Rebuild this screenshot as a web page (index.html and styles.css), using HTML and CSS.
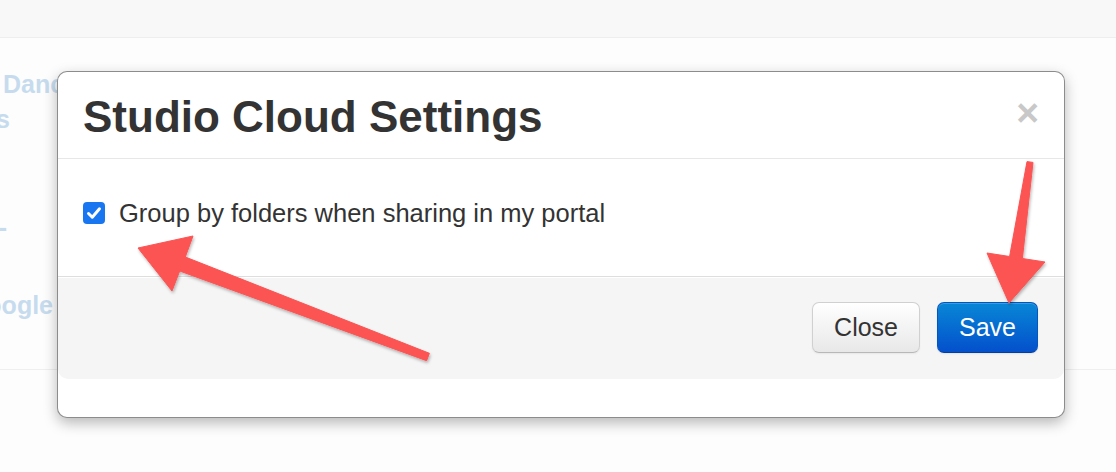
FILE: index.html
```html
<!DOCTYPE html>
<html lang="en">
<head>
<meta charset="utf-8">
<title>Studio Cloud Settings</title>
<link rel="stylesheet" href="styles.css">
</head>
<body>
<div class="page">
  <div class="topbar"></div>
  <div class="bg-list">
    <div class="bgrow r1">Dance Studio</div>
    <div class="bgrow r2 clip"><span>Classes</span></div>
    <div class="bgrow r3 clip"><span>Studio -</span></div>
    <div class="bgrow r4 clip"><span>Google</span></div>
    <div class="divider"></div>
  </div>

  <div class="modal">
    <div class="modal-header">
      <h3 class="modal-title">Studio Cloud Settings</h3>
      <span class="close">×</span>
    </div>
    <div class="modal-body">
      <label class="check-row">
        <span class="checkbox">
          <svg viewBox="0 0 22 22" width="22" height="22"><path d="M5.5 11.5 L9.3 15.2 L16.5 6.8" fill="none" stroke="#fff" stroke-width="3" stroke-linecap="round" stroke-linejoin="round"/></svg>
        </span>
        <span class="check-label">Group by folders when sharing in my portal</span>
      </label>
    </div>
    <div class="modal-footer">
      <button class="btn btn-default">Close</button>
      <button class="btn btn-primary">Save</button>
    </div>
  </div>

  <svg class="arrows" viewBox="0 0 1116 472" width="1116" height="472">
    <defs>
      <filter id="sh" x="-10%" y="-10%" width="120%" height="120%">
        <feDropShadow dx="1" dy="2" stdDeviation="1.5" flood-color="#000" flood-opacity="0.28"/>
      </filter>
    </defs>
    <polygon filter="url(#sh)" fill="#fc5353" stroke="#fc5353" stroke-width="1" stroke-linejoin="round"
      points="138,248 193,236 185.3,257 429.4,353.3 426.6,360.7 179.7,271 172,291"/>
    <polygon filter="url(#sh)" fill="#fc5353" stroke="#fc5353" stroke-width="1" stroke-linejoin="round"
      points="1009,303 987,253 1009.6,256.5 1027,161.6 1033,162.4 1022.4,258.5 1045,262"/>
  </svg>
</div>
</body>
</html>
```
FILE: styles.css
```css
* { box-sizing: border-box; }
html, body { margin: 0; padding: 0; }
body {
  background: #fefdfd;
  font-family: "Liberation Sans", Arial, Helvetica, sans-serif;
  color: #333;
}
.page {
  position: relative;
  width: 1116px;
  height: 472px;
  overflow: hidden;
}
.topbar {
  height: 38px;
  background: #f9f8f8;
  border-bottom: 1px solid #efeded;
}
.bg-list {
  padding-top: 29px;
}
.bgrow {
  font-size: 25px;
  font-weight: bold;
  line-height: 35px;
  height: 35px;
  color: #c6dcee;
  white-space: nowrap;
}
.bgrow.clip {
  display: flex;
  justify-content: flex-end;
  overflow: hidden;
}
.r1 { padding-left: 3px; }
.r2 { width: 10px; }
.r3 { width: 7px; margin-top: 73px; }
.r4 { width: 53px; margin-top: 43px; }
.divider {
  margin-top: 46px;
  border-top: 1px solid #efefef;
}

.modal {
  position: absolute;
  left: 57px;
  top: 71px;
  width: 1008px;
  background: #fff;
  border: 1px solid rgba(0, 0, 0, 0.45);
  border-radius: 10px;
  box-shadow: 0 5px 14px rgba(0, 0, 0, 0.28);
  padding-bottom: 38px;
}
.modal-header {
  display: flex;
  justify-content: space-between;
  align-items: center;
  padding: 18px 25px 15px 25px;
  border-bottom: 1px solid #e7e7e7;
}
.modal-title {
  margin: 0;
  font-size: 44px;
  line-height: 53px;
  font-weight: bold;
  color: #333;
}
.close {
  font-size: 39px;
  line-height: 1;
  font-weight: bold;
  color: #c8c8c8;
  margin-top: -9px;
}
.modal-body {
  padding: 36px 27px 45px 25px;
}
.check-row {
  display: flex;
  align-items: center;
  gap: 14px;
  line-height: 36px;
}
.checkbox {
  width: 22px;
  height: 22px;
  border-radius: 4px;
  background: #1877f0;
  display: flex;
}
.check-label {
  font-size: 25.5px;
  color: #333;
}
.modal-footer {
  display: flex;
  justify-content: flex-end;
  gap: 17px;
  padding: 25px 26px 26px;
  background: #f5f5f5;
  border-top: 1px solid #dedede;
  border-radius: 0 0 10px 10px;
  box-shadow: inset 0 1px 0 #fff;
}
.btn {
  height: 51px;
  padding: 0 21px;
  font-family: "Liberation Sans", Arial, Helvetica, sans-serif;
  font-size: 25px;
  border-radius: 7px;
  border: 1px solid #c8c8c8;
}
.btn-default {
  color: #333;
  background: linear-gradient(#ffffff, #e8e8e8);
  border-color: #d0d0d0 #d0d0d0 #b8b8b8;
  box-shadow: inset 0 1px 0 rgba(255,255,255,0.3), 0 1px 2px rgba(0,0,0,0.06);
}
.btn-primary {
  color: #fff;
  background: linear-gradient(#0887d6, #0450cc);
  border-color: #0455c4 #0455c4 #033f9e;
  box-shadow: inset 0 1px 0 rgba(255,255,255,0.2), 0 1px 2px rgba(0,0,0,0.08);
}
.arrows {
  position: absolute;
  left: 0;
  top: 0;
  pointer-events: none;
}
```
